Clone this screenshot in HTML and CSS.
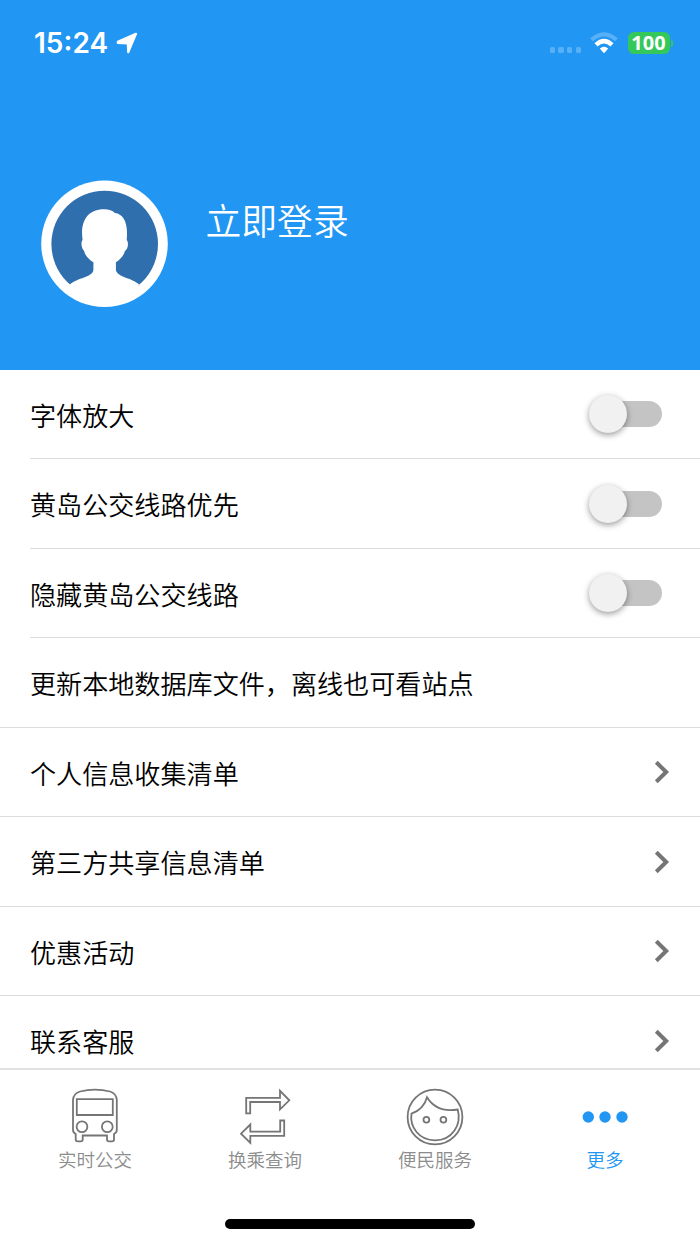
FILE: index.html
```
<!DOCTYPE html>
<html lang="zh-CN">
<head>
  <meta charset="UTF-8">
  <meta name="viewport" content="width=device-width, initial-scale=1.0">
  <title>更多</title>
  <link rel="stylesheet" href="styles.css">
</head>
<body>
<div class="app">
  <header class="header">
    <div class="status-bar">
      <div class="status-left">
        <span class="time">15:24</span>
        <svg class="location" width="22" height="22" viewBox="0 0 22 22">
          <path d="M1.8 9.8 20 1.8 12.2 20.2 11.8 11.3 1.8 10.9z" fill="#fff" stroke="#fff" stroke-width="2.2" stroke-linejoin="round"/>
        </svg>
      </div>
      <div class="status-right">
        <div class="signal"><i></i><i></i><i></i><i></i></div>
        <svg class="wifi" width="28" height="22" viewBox="0 0 28 22">
          <path d="M1.5 7.8Q14-3.2 26.5 7.8" fill="none" stroke="#fff" stroke-opacity=".25" stroke-width="4"/>
          <path d="M6 12.8Q14 5.4 22 12.8" fill="none" stroke="#fff" stroke-width="4.4"/>
          <path d="M9.8 16.6Q14 13 18.2 16.6L14.8 20.5Q14 21.3 13.2 20.5z" fill="#fff"/>
        </svg>
        <div class="battery">100</div>
        <div class="battery-tip"></div>
      </div>
    </div>
    <div class="profile">
      <svg class="avatar" width="127" height="127" viewBox="0 0 127 127">
        <circle cx="63.5" cy="63.7" r="63.3" fill="#fff"/>
        <circle cx="63.7" cy="64" r="53.3" fill="#2f6fad"/>
        <path d="M29 104.3C36 98 52 97 52.4 90V82.3C47 79 44 75 43 70.8C40.5 69 39.5 62 41.6 60C39 42 46 29.3 63 29.3C68 29.2 71 30.5 74 33C82 34 87.5 42 85.7 60C88 62 87 70 84 70.8C83 75 80 79 74.9 82.3V90C76 97 91 98 98 104.3L92 118H35z" fill="#fff"/>
      </svg>
      <div class="login">立即登录</div>
    </div>
  </header>

  <main class="list">
    <!-- Switches -->
    <div class="group">
      <div class="row"><span>字体放大</span><div class="switch"><div class="knob"></div></div></div>
      <div class="row"><span>黄岛公交线路优先</span><div class="switch"><div class="knob"></div></div></div>
      <div class="row"><span>隐藏黄岛公交线路</span><div class="switch"><div class="knob"></div></div></div>
    </div>
    <!-- Links -->
    <div class="row"><span>更新本地数据库文件，离线也可看站点</span></div>
    <div class="row">
      <span>个人信息收集清单</span>
      <svg class="chevron" width="16" height="24" viewBox="0 0 16 24"><path d="M2.3 2.3 12.2 12 2.3 21.7"/></svg>
    </div>
    <div class="row">
      <span>第三方共享信息清单</span>
      <svg class="chevron" width="16" height="24" viewBox="0 0 16 24"><path d="M2.3 2.3 12.2 12 2.3 21.7"/></svg>
    </div>
    <div class="row">
      <span>优惠活动</span>
      <svg class="chevron" width="16" height="24" viewBox="0 0 16 24"><path d="M2.3 2.3 12.2 12 2.3 21.7"/></svg>
    </div>
    <div class="row">
      <span>联系客服</span>
      <svg class="chevron" width="16" height="24" viewBox="0 0 16 24"><path d="M2.3 2.3 12.2 12 2.3 21.7"/></svg>
    </div>
  </main>

  <nav class="tabs">
    <div class="tab">
      <svg class="icon" width="60" height="60" viewBox="0 0 60 60">
        <path d="M8 14Q8 8 15 5.5Q30 1.8 45 5.5Q51.8 8 51.8 14V44Q51.8 46.5 49 48V53.5Q49 55.3 47 55.3H44Q42 55.3 42 53.5V49.5H17.7V53.5Q17.7 55.3 15.7 55.3H12.7Q10.7 55.3 10.7 53.5V48Q8 46.5 8 44z"/>
        <path d="M11.8 13.2H47.8V29H11.8z"/>
        <circle cx="17" cy="40.7" r="5.4"/>
        <circle cx="42.3" cy="40.7" r="5.4"/>
      </svg>
      <span>实时公交</span>
    </div>
    <div class="tab">
      <svg class="icon" width="60" height="60" viewBox="0 0 60 60">
        <path d="M11.2 27.3V11.8H45V4.8L54.3 14.3 45 23.3V16H15.2V27.3z"/>
        <path d="M49.2 34.5V49.8H15.3V56.8L6 47.7 15.3 38.5V45.7H45.2V34.5z"/>
      </svg>
      <span>换乘查询</span>
    </div>
    <div class="tab">
      <svg class="icon" width="60" height="60" viewBox="0 0 60 60">
        <circle cx="30" cy="31" r="27.4"/>
        <path d="M6.5 27.7C14 25 20 19 22 11.3C28 21 38 26 52.7 23.5C57 39 47 54.3 30 54.3C14 54.3 4.5 41 6.5 27.7z"/>
        <circle cx="21.4" cy="33.8" r="2.9"/>
        <circle cx="38.4" cy="33.8" r="2.9"/>
      </svg>
      <span>便民服务</span>
    </div>
    <div class="tab active">
      <svg class="icon" width="60" height="60" viewBox="0 0 60 60">
        <circle cx="13.3" cy="31" r="5.7"/>
        <circle cx="30" cy="31" r="5.7"/>
        <circle cx="47" cy="31" r="5.7"/>
      </svg>
      <span>更多</span>
    </div>
  </nav>
  <div class="home-indicator"></div>
</div>
</body>
</html>
```
FILE: styles.css
```
/* General Styles */
* {
  box-sizing: border-box;
}
body {
  margin: 0;
  background: #fff;
  color: #000;
  font-family: "Noto Sans CJK SC", sans-serif;
  font-weight: 350;
}
.app {
  display: flex;
  flex-direction: column;
  height: 1244px;
  overflow: hidden;
}
svg {
  display: block;
  flex: none;
}
/* Header */
.header {
  flex: none;
  height: 369.5px;
  background: #2196f3;
  color: #fff;
}
.status-bar {
  display: flex;
  justify-content: space-between;
  align-items: center;
  height: 86px;
  padding: 0 27px 0 34px;
  font-family: Inter, sans-serif;
}
.status-left,
.status-right {
  display: flex;
  align-items: center;
}
.time {
  font-size: 28px;
  font-weight: 600;
}
.location {
  margin-left: 8px;
}
.signal {
  display: flex;
  gap: 3.4px;
  margin: 14px 9px 0 0;
}
.signal i {
  width: 5.3px;
  height: 5.6px;
  border-radius: 1.5px;
  background: rgba(255, 255, 255, 0.25);
}
.battery {
  width: 42px;
  height: 22px;
  margin-left: 9.5px;
  border-radius: 6px;
  background: #34c759;
  font-family: "Noto Sans", sans-serif;
  font-size: 20px;
  font-weight: 700;
  line-height: 22px;
  text-align: center;
}
.battery-tip {
  width: 2px;
  height: 7px;
  margin-left: 1.5px;
  border-radius: 0 3px 3px 0;
  background: #34c759;
}
.profile {
  display: flex;
  padding: 94px 0 0 41px;
}
.login {
  margin: 13px 0 0 37.5px;
  font-size: 35.8px;
  line-height: 52px;
}
/* List */
.list {
  flex: 1;
  min-height: 0;
  overflow: hidden;
}
.group {
  padding-left: 30px;
}
.row {
  display: flex;
  justify-content: space-between;
  align-items: center;
  height: 89.5px;
  padding: 1px 30px 0;
  border-bottom: 1px solid #dcdcdc;
  font-size: 26.1px;
}
.row span {
  padding-top: 1px;
}
.group .row {
  padding: 1px 38px 0 0;
}
.switch {
  width: 72px;
  height: 26px;
  border-radius: 13px;
  background: #c4c4c4;
}
.knob {
  width: 38px;
  height: 38px;
  margin: -6px 0 0 -1px;
  border-radius: 50%;
  background: #f1f1f1;
  box-shadow: 0 2px 6px rgba(0, 0, 0, 0.4);
}
.chevron path {
  fill: none;
  stroke: #757575;
  stroke-width: 4;
}
/* Tab Bar */
.tabs {
  display: flex;
  flex: none;
  height: 151px;
  padding: 16px 10px 0;
  border-top: 2px solid #e2e2e2;
}
.tab {
  display: flex;
  flex: 1;
  flex-direction: column;
  align-items: center;
  color: #8c8c8c;
  font-size: 18.5px;
  line-height: 27px;
}
.icon {
  fill: none;
  stroke: #757575;
  stroke-width: 1.8;
}
.active {
  color: #2196f3;
}
.active .icon {
  fill: #2196f3;
  stroke: none;
}
.home-indicator {
  flex: none;
  width: 250px;
  height: 10px;
  margin: 0 auto 15px;
  border-radius: 5px;
  background: #000;
}
```
